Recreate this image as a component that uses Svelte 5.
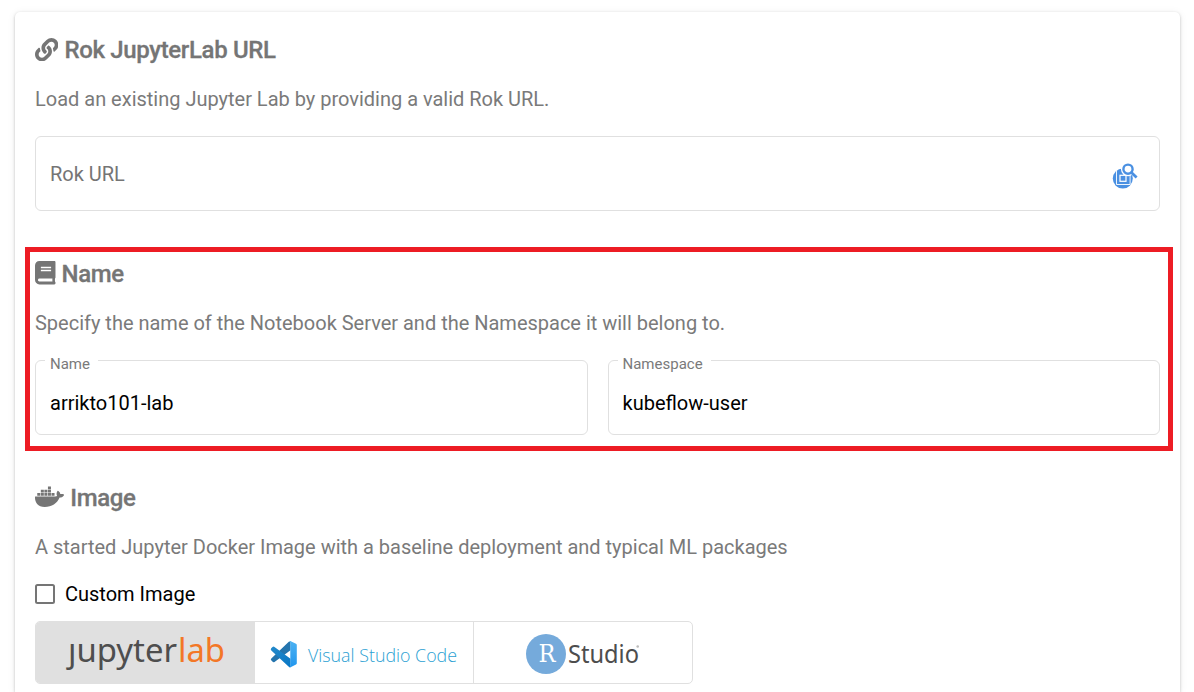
<script>
  const icons = {
    link: {
      box: '0 0 512 512', width: 23.4,
      path: 'M326.612 185.391c59.747 59.809 58.927 155.698.36 214.59-.11.12-.24.25-.36.37l-67.2 67.2c-59.27 59.27-155.699 59.262-214.96 0-59.27-59.26-59.27-155.7 0-214.96l37.106-37.106c9.84-9.84 26.786-3.3 27.294 10.606.648 17.722 3.826 35.527 9.69 52.721 1.986 5.822.567 12.262-3.783 16.612l-13.087 13.087c-28.026 28.026-28.905 73.66-1.155 101.96 28.024 28.579 74.086 28.749 102.325.51l67.2-67.19c28.191-28.191 28.073-73.757 0-101.83-3.701-3.694-7.429-6.564-10.341-8.569a16.037 16.037 0 0 1-6.947-12.606c-.396-10.567 3.348-21.456 11.698-29.806l21.054-21.055c5.521-5.521 14.182-6.199 20.584-1.731a152.482 152.482 0 0 1 20.522 17.197zM467.547 44.449c-59.261-59.262-155.69-59.27-214.96 0l-67.2 67.2c-.12.12-.25.25-.36.37-58.566 58.892-59.387 154.781.36 214.59a152.454 152.454 0 0 0 20.521 17.196c6.402 4.468 15.064 3.789 20.584-1.731l21.054-21.055c8.35-8.35 12.094-19.239 11.698-29.806a16.037 16.037 0 0 0-6.947-12.606c-2.912-2.005-6.64-4.875-10.341-8.569-28.073-28.073-28.191-73.639 0-101.83l67.2-67.19c28.239-28.239 74.3-28.069 102.325.51 27.75 28.3 26.872 73.934-1.155 101.96l-13.087 13.087c-4.35 4.35-5.769 10.79-3.783 16.612 5.864 17.194 9.042 34.999 9.69 52.721.509 13.906 17.454 20.446 27.294 10.606l37.106-37.106c59.271-59.259 59.271-155.699.001-214.959z'
    },
    book: {
      box: '0 0 448 512', width: 20.5,
      path: 'M448 360V24c0-13.3-10.7-24-24-24H96C43 0 0 43 0 96v320c0 53 43 96 96 96h328c13.3 0 24-10.7 24-24v-16c0-7.5-3.5-14.3-8.9-18.7-4.2-15.4-4.2-59.3 0-74.7 5.4-4.3 8.9-11.1 8.9-18.6zM128 134c0-3.3 2.7-6 6-6h212c3.3 0 6 2.7 6 6v20c0 3.3-2.7 6-6 6H134c-3.3 0-6-2.7-6-6v-20zm0 64c0-3.3 2.7-6 6-6h212c3.3 0 6 2.7 6 6v20c0 3.3-2.7 6-6 6H134c-3.3 0-6-2.7-6-6v-20zm253.4 250H96c-17.7 0-32-14.3-32-32 0-17.6 14.4-32 32-32h285.4c-1.9 17.1-1.9 46.9 0 64z'
    },
    docker: {
      box: '0 0 640 512', width: 29.2,
      path: 'M349.9 236.3h-66.1v-59.4h66.1v59.4zm0-204.3h-66.1v60.7h66.1V32zm78.2 144.8H362v59.4h66.1v-59.4zm-156.3-72.1h-66.1v60.1h66.1v-60.1zm78.1 0h-66.1v60.1h66.1v-60.1zm276.8 100c-14.4-9.7-47.6-13.2-73.1-8.4-3.3-24-16.7-44.9-41.1-63.7l-14-9.3-9.3 14c-18.4 27.8-23.4 73.6-3.7 103.8-8.7 4.7-25.8 11.1-48.4 10.7H2.4c-8.7 50.8 5.8 116.8 44 162.1 37.1 43.9 92.7 66.2 165.4 66.2 157.4 0 273.9-72.5 328.4-204.2 21.4.4 67.6.1 91.3-45.2 1.5-2.5 6.6-13.2 8.5-17.1l-13.3-8.9zm-511.1-27.9h-66v59.4h66.1v-59.4zm78.1 0h-66.1v59.4h66.1v-59.4zm78.1 0h-66.1v59.4h66.1v-59.4zm-78.1-72.1h-66.1v60.1h66.1v-60.1z'
    }
  };
  const fields = [
    { label: 'Name', value: 'arrikto101-lab' },
    { label: 'Namespace', value: 'kubeflow-user' }
  ];
</script>

{#snippet heading(icon, title)}
  <h2>
    <svg viewBox={icon.box} width={icon.width} height="23.4" aria-hidden="true"><path fill="currentColor" d={icon.path} /></svg>
    <span>{title}</span>
  </h2>
{/snippet}

<main class="card">
  <section>
    {@render heading(icons.link, 'Rok JupyterLab URL')}
    <p>Load an existing Jupyter Lab by providing a valid Rok URL.</p>
    <div class="field url">
      <span class="placeholder">Rok URL</span>
      <svg width="26" height="27" viewBox="0 0 26 27" aria-hidden="true">
        <circle cx="10.8" cy="15.6" r="10" fill="#4a90e2" />
        <path d="M4.5 7.5v14h13.6V11" fill="none" stroke="#fff" stroke-width=".9" />
        <rect x="8" y="12.3" width="6" height="6" fill="#4a90e2" stroke="#fff" stroke-width="1.2" />
        <circle cx="16" cy="6.2" r="7" fill="#fff" />
        <circle cx="16" cy="6.2" r="4.6" fill="#fff" stroke="#4a90e2" stroke-width="2.4" />
        <path d="M19.4 9.6l5.2 5" stroke="#4a90e2" stroke-width="2.8" />
      </svg>
    </div>
  </section>

  <section class="marked">
    {@render heading(icons.book, 'Name')}
    <p>Specify the name of the Notebook Server and the Namespace it will belong to.</p>
    <div class="pair">
      {#each fields as f}
        <div class="field">
          <span class="label">{f.label}</span>
          <span class="value">{f.value}</span>
        </div>
      {/each}
    </div>
  </section>

  <section class="last">
    {@render heading(icons.docker, 'Image')}
    <p>A started Jupyter Docker Image with a baseline deployment and typical ML packages</p>
    <div class="check"><span class="box"></span><span>Custom Image</span></div>
    <div class="toggles">
      <div class="toggle selected">
        <svg width="218" height="61" viewBox="0 0 218 61">
          <text x="32" y="40" font-size="33" fill="#4e4e4e" textLength="109" lengthAdjust="spacingAndGlyphs">ȷupyter</text>
          <text x="142" y="40" font-size="33" fill="#f37726" textLength="47" lengthAdjust="spacingAndGlyphs">lab</text>
        </svg>
      </div>
      <div class="toggle">
        <svg width="218" height="61" viewBox="0 0 218 61">
          <defs>
            <linearGradient id="fold" x1="0" y1="0" x2="0" y2="1"><stop offset="0" stop-color="#4db2f2" /><stop offset="1" stop-color="#2196ee" /></linearGradient>
            <linearGradient id="arm" x1="0" y1="0" x2="1" y2="1"><stop offset="0" stop-color="#2489ca" /><stop offset="1" stop-color="#0877c5" /></linearGradient>
          </defs>
          <g transform="translate(0 1)">
            <path d="M35.5 18.5V27.2L19.5 38.9Q18.4 39.6 17.4 38.6L16.2 37.3Q15.3 36.3 16.3 35.4L33.8 18.8Z" fill="#2474ad" />
            <path d="M16.2 25.2L17.5 24Q18.5 23.2 19.5 24L35.5 35.8V44.2Q34.6 44.5 33.8 43.7L16.3 27.5Q15.2 26.2 16.2 25.2Z" fill="url(#arm)" />
            <path d="M35.3 18L41 20.7Q41.8 21.1 41.8 22V40.3Q41.8 41.2 41 41.6L35.5 44.3Q34.8 44.5 34 43.8Q35.3 44.2 35.3 42.8V19.8Q35.3 18.1 34 18.5Q34.6 17.8 35.3 18Z" fill="url(#fold)" />
          </g>
          <text x="53" y="40" font-size="19" font-weight="300" fill="#2b9fd3" textLength="149" lengthAdjust="spacingAndGlyphs">Visual Studio Code</text>
        </svg>
      </div>
      <div class="toggle">
        <svg width="218" height="61" viewBox="0 0 218 61">
          <circle cx="72" cy="32" r="20" fill="#75aadb" />
          <text class="slab" x="64.5" y="40" font-size="24" fill="#fff" textLength="17" lengthAdjust="spacingAndGlyphs">R</text>
          <text x="94" y="41" font-size="25" fill="#4d4d4d" textLength="71" lengthAdjust="spacingAndGlyphs">Studio</text>
          <circle cx="163.7" cy="24.5" r="1.3" fill="#bbb" />
        </svg>
      </div>
    </div>
  </section>
</main>

<style>
  :global(body) { background: #fff; }
  .card {
    box-sizing: border-box;
    height: 680px;
    margin: 12px 14px 0 15px;
    padding: 20px 20px 0;
    border-radius: 5px 5px 0 0;
    background: #fff;
    box-shadow: 0 1px 3px rgba(0, 0, 0, .24), 0 1px 10px rgba(0, 0, 0, .06);
    clip-path: inset(-12px -14px 0 -15px);
    font: 400 20px/30px Roboto, sans-serif;
    color: #000;
  }
  section { height: 224px; }
  h2 {
    display: flex;
    align-items: center;
    gap: 6px;
    height: 35px;
    margin: 0;
    font-size: 24px;
    font-weight: 500;
    letter-spacing: -.34px;
    color: #757575;
  }
  h2 svg { flex: none; }
  h2 span { -webkit-text-stroke: .3px currentColor; }
  .marked h2 svg { margin-bottom: 1px; }
  .last h2 svg { margin-bottom: 2px; }
  p { margin: 17px 0 22px; color: #7a7a7a; letter-spacing: -.008px; white-space: nowrap; }
  .field {
    position: relative;
    box-sizing: border-box;
    display: flex;
    align-items: center;
    height: 75px;
    padding: 0 21px 0 14px;
    border: 1px solid #e0e0e0;
    border-radius: 6px;
  }
  .url { justify-content: space-between; }
  .placeholder { color: #757575; }
  .url svg { margin-top: 5px; }
  .pair { display: grid; grid-template-columns: 1fr 1fr; gap: 20px; }
  .value { padding-top: 10px; }
  .label {
    position: absolute;
    top: -9px;
    left: 9px;
    padding: 0 8px 0 5px;
    background: #fff;
    color: #7a7a7a;
    font-size: 15px;
    line-height: 24px;
  }
  .marked { position: relative; }
  .marked::after {
    content: '';
    position: absolute;
    inset: -9px -13px 29px -10px;
    border: 5px solid #ed1c24;
  }
  .last { height: auto; }
  .check { display: flex; align-items: center; gap: 10px; height: 30px; margin-top: -5px; }
  .box { box-sizing: border-box; width: 20px; height: 20px; border: 2px solid #757575; border-radius: 2.5px; }
  .toggles {
    box-sizing: border-box;
    display: flex;
    width: 658px;
    height: 63px;
    margin-top: 12px;
    overflow: hidden;
    border: 1px solid #e0e0e0;
    border-radius: 5px;
  }
  .toggle { box-sizing: border-box; flex: none; width: 219px; border-left: 1px solid #e0e0e0; }
  .toggle:first-child { width: 218px; border-left: 0; }
  .toggle svg { display: block; }
  .toggle text { font-family: "Noto Sans", sans-serif; }
  .toggle text[font-weight] { font-family: "Open Sans", sans-serif; }
  .toggle .slab { font-family: "DejaVu Serif", serif; }
  .selected { background: #e0e0e0; }
</style>
